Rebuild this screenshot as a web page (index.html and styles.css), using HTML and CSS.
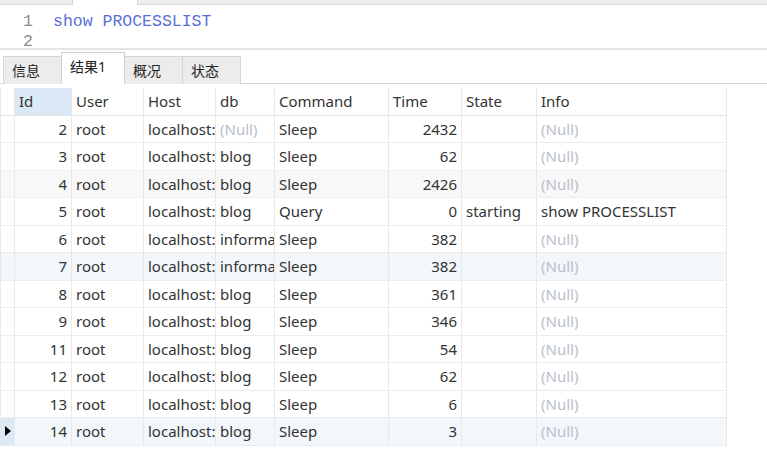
FILE: index.html
```html
<!DOCTYPE html>
<html>
<head>
<meta charset="utf-8">
<link rel="stylesheet" href="styles.css">
</head>
<body>
<div class="doc-tabs">
  <div class="doc-tab-gap"></div>
  <div class="doc-tab"></div>
  <div class="doc-tab-rest"></div>
</div>
<div class="editor">
  <div class="line"><span class="ln">1</span><span class="code">show PROCESSLIST</span></div>
  <div class="line"><span class="ln">2</span><span class="code"></span></div>
</div>
<div class="tabbar">
  <div class="tab">信息</div>
  <div class="tab active">结果1</div>
  <div class="tab">概况</div>
  <div class="tab">状态</div>
</div>
<div class="content">
  <div class="grid">
    <div class="row head">
      <div class="c g"></div>
      <div class="c sel">Id</div>
      <div class="c">User</div>
      <div class="c">Host</div>
      <div class="c">db</div>
      <div class="c">Command</div>
      <div class="c">Time</div>
      <div class="c">State</div>
      <div class="c">Info</div>
    </div>
    <div class="row">
      <div class="c g"></div><div class="c r">2</div><div class="c">root</div><div class="c">localhost:</div><div class="c null">(Null)</div><div class="c">Sleep</div><div class="c r">2432</div><div class="c"></div><div class="c null">(Null)</div>
    </div>
    <div class="row">
      <div class="c g"></div><div class="c r">3</div><div class="c">root</div><div class="c">localhost:</div><div class="c">blog</div><div class="c">Sleep</div><div class="c r">62</div><div class="c"></div><div class="c null">(Null)</div>
    </div>
    <div class="row alt">
      <div class="c g"></div><div class="c r">4</div><div class="c">root</div><div class="c">localhost:</div><div class="c">blog</div><div class="c">Sleep</div><div class="c r">2426</div><div class="c"></div><div class="c null">(Null)</div>
    </div>
    <div class="row">
      <div class="c g"></div><div class="c r">5</div><div class="c">root</div><div class="c">localhost:</div><div class="c">blog</div><div class="c">Query</div><div class="c r">0</div><div class="c">starting</div><div class="c">show PROCESSLIST</div>
    </div>
    <div class="row">
      <div class="c g"></div><div class="c r">6</div><div class="c">root</div><div class="c">localhost:</div><div class="c">information_schema</div><div class="c">Sleep</div><div class="c r">382</div><div class="c"></div><div class="c null">(Null)</div>
    </div>
    <div class="row hover">
      <div class="c g"></div><div class="c r">7</div><div class="c">root</div><div class="c">localhost:</div><div class="c">information_schema</div><div class="c">Sleep</div><div class="c r">382</div><div class="c"></div><div class="c null">(Null)</div>
    </div>
    <div class="row">
      <div class="c g"></div><div class="c r">8</div><div class="c">root</div><div class="c">localhost:</div><div class="c">blog</div><div class="c">Sleep</div><div class="c r">361</div><div class="c"></div><div class="c null">(Null)</div>
    </div>
    <div class="row">
      <div class="c g"></div><div class="c r">9</div><div class="c">root</div><div class="c">localhost:</div><div class="c">blog</div><div class="c">Sleep</div><div class="c r">346</div><div class="c"></div><div class="c null">(Null)</div>
    </div>
    <div class="row">
      <div class="c g"></div><div class="c r">11</div><div class="c">root</div><div class="c">localhost:</div><div class="c">blog</div><div class="c">Sleep</div><div class="c r">54</div><div class="c"></div><div class="c null">(Null)</div>
    </div>
    <div class="row">
      <div class="c g"></div><div class="c r">12</div><div class="c">root</div><div class="c">localhost:</div><div class="c">blog</div><div class="c">Sleep</div><div class="c r">62</div><div class="c"></div><div class="c null">(Null)</div>
    </div>
    <div class="row">
      <div class="c g"></div><div class="c r">13</div><div class="c">root</div><div class="c">localhost:</div><div class="c">blog</div><div class="c">Sleep</div><div class="c r">6</div><div class="c"></div><div class="c null">(Null)</div>
    </div>
    <div class="row current">
      <div class="c g"><span class="arrow"></span></div><div class="c r">14</div><div class="c">root</div><div class="c">localhost:</div><div class="c">blog</div><div class="c">Sleep</div><div class="c r">3</div><div class="c"></div><div class="c null">(Null)</div>
    </div>
  </div>
</div>
</body>
</html>
```

FILE: styles.css
```css
html, body {
  margin: 0;
  padding: 0;
  background: #ffffff;
}
body {
  width: 767px;
  height: 461px;
  overflow: hidden;
  font-family: "Noto Sans", "Noto Sans CJK SC", sans-serif;
  color: #333333;
}
.doc-tabs {
  display: flex;
  height: 5px;
}
.doc-tab-gap, .doc-tab-rest {
  background: #ededed;
  border-bottom: 1px solid #d9d9d9;
  box-sizing: border-box;
}
.doc-tab-gap { width: 73px; border-right: 1px solid #d4d4d4; }
.doc-tab { width: 64px; background: #ffffff; }
.doc-tab-rest { flex: 1; border-left: 1px solid #d4d4d4; }

.editor {
  height: 43px;
  box-sizing: border-box;
  padding-top: 7px;
  overflow: hidden;
  font-family: "Liberation Mono", monospace;
  font-size: 16.5px;
}
.line {
  display: flex;
  height: 20px;
  line-height: 20px;
  white-space: pre;
}
.ln {
  width: 33px;
  text-align: right;
  color: #8a8a8a;
}
.code {
  margin-left: 20px;
  color: #5a6fd8;
}

.tabbar {
  display: flex;
  align-items: flex-end;
  height: 36px;
  box-sizing: border-box;
  border-top: 2px solid #e6e6e6;
  border-bottom: 1px solid #d6d6d6;
  padding-left: 3px;
  font-size: 14px;
}
.tab {
  width: 59px;
  height: 28px;
  box-sizing: border-box;
  padding-left: 8px;
  line-height: 27px;
  background: #ececec;
  border: 1px solid #d6d6d6;
  border-bottom: none;
  margin-bottom: -1px;
  margin-right: -1px;
  color: #222222;
}
.tab.active {
  width: 64px;
  height: 32px;
  line-height: 27px;
  background: #ffffff;
  border-color: #d0d0d0;
  position: relative;
  z-index: 1;
  padding-bottom: 4px;
}
.content {
  padding-top: 4px;
}
.grid {
  width: 727px;
  font-size: 15px;
}
.row {
  display: grid;
  grid-template-columns: 15px 57px 72px 72px 59px 114px 73px 75px 190px;
  height: 27.5px;
}
.c {
  box-sizing: border-box;
  border-right: 1px solid #e8e8e8;
  border-bottom: 1px solid #ececec;
  padding: 0 4px;
  display: flex;
  align-items: center;
  white-space: nowrap;
  overflow: hidden;
}
.c.g {
  border-left: 1px solid #e8e8e8;
  padding: 0;
}
.c.r { justify-content: flex-end; }
.null { color: #b9c0cc; }
.head .c { border-bottom-color: #e2e2e2; }
.head .c.sel { background: #dbe8f6; }
.row.alt { background: #f8f8f8; }
.row.hover { background: #f2f7fc; }
.row.current { background: #f2f7fc; }
.row.current .c.g { background: #dbe8f6; justify-content: center; }
.arrow {
  width: 0;
  height: 0;
  border-top: 5px solid transparent;
  border-bottom: 5px solid transparent;
  border-left: 6px solid #000000;
  margin-left: 1px;
}
```
